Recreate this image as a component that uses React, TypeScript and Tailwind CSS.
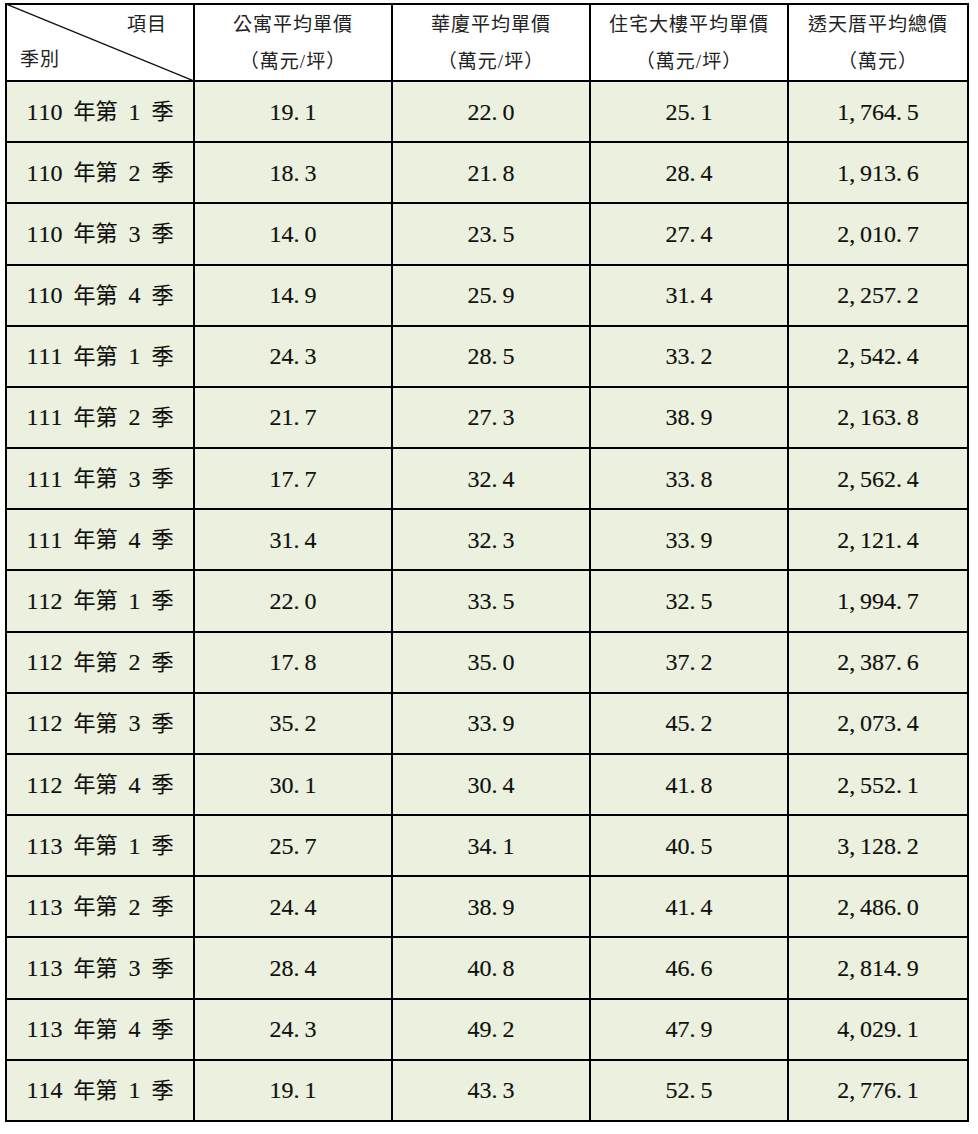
const rows: [string, string, string, string, string][] = [
  ["110 年第 1 季", "19.1", "22.0", "25.1", "1,764.5"],
  ["110 年第 2 季", "18.3", "21.8", "28.4", "1,913.6"],
  ["110 年第 3 季", "14.0", "23.5", "27.4", "2,010.7"],
  ["110 年第 4 季", "14.9", "25.9", "31.4", "2,257.2"],
  ["111 年第 1 季", "24.3", "28.5", "33.2", "2,542.4"],
  ["111 年第 2 季", "21.7", "27.3", "38.9", "2,163.8"],
  ["111 年第 3 季", "17.7", "32.4", "33.8", "2,562.4"],
  ["111 年第 4 季", "31.4", "32.3", "33.9", "2,121.4"],
  ["112 年第 1 季", "22.0", "33.5", "32.5", "1,994.7"],
  ["112 年第 2 季", "17.8", "35.0", "37.2", "2,387.6"],
  ["112 年第 3 季", "35.2", "33.9", "45.2", "2,073.4"],
  ["112 年第 4 季", "30.1", "30.4", "41.8", "2,552.1"],
  ["113 年第 1 季", "25.7", "34.1", "40.5", "3,128.2"],
  ["113 年第 2 季", "24.4", "38.9", "41.4", "2,486.0"],
  ["113 年第 3 季", "28.4", "40.8", "46.6", "2,814.9"],
  ["113 年第 4 季", "24.3", "49.2", "47.9", "4,029.1"],
  ["114 年第 1 季", "19.1", "43.3", "52.5", "2,776.1"],
];

const headers: [string, string][] = [
  ["公寓平均單價", "（萬元/坪）"],
  ["華廈平均單價", "（萬元/坪）"],
  ["住宅大樓平均單價", "（萬元/坪）"],
  ["透天厝平均總價", "（萬元）"],
];

// MingLiU draws "." and "," half an em wide; pad them to match
function Num({ value }: { value: string }) {
  return (
    <>
      {value.split("").map((ch, i) =>
        ch === "." || ch === "," ? (
          <span key={i} className="mr-[0.2em]">
            {ch}
          </span>
        ) : (
          <span key={i}>{ch}</span>
        ),
      )}
    </>
  );
}

function Label({ value }: { value: string }) {
  return (
    <>
      {value.split("").map((ch, i) =>
        ch === " " ? (
          <span key={i} className="inline-block w-[11px]" />
        ) : /[0-9]/.test(ch) ? (
          <span key={i}>{ch}</span>
        ) : (
          <span key={i} className="text-[22px]">
            {ch}
          </span>
        ),
      )}
    </>
  );
}

export default function App() {
  return (
    <div className="min-h-[1134px] bg-white pt-[3px] pl-[5px] font-['Liberation_Serif','Noto_Sans_CJK_TC',serif] text-black">
      <div className="grid h-[1119px] w-[964px] grid-cols-[186px_196px_196px_196px_178px] grid-rows-[75px_repeat(17,minmax(0,1fr))] gap-[2px] bg-black p-[2px]">
        <div className="relative flex flex-col bg-white text-[19px] tracking-[1px] text-[#222]">
          <svg
            className="absolute -top-[1px] -left-[1px] h-[77px] w-[188px]"
            viewBox="0 0 188 77"
            preserveAspectRatio="none"
          >
            <line x1="0" y1="0" x2="188" y2="77" stroke="#111" strokeWidth="1.3" />
          </svg>
          <div className="h-[37px] pr-[26px] text-right leading-[40px]">項目</div>
          <div className="h-[38px] pl-[13px] text-left leading-[36px]">季別</div>
        </div>
        {headers.map(([a, b]) => (
          <div
            key={a}
            className="flex flex-col items-center justify-center bg-white text-[19px] tracking-[1px] text-[#222]"
          >
            <div className="leading-[38px]">{a}</div>
            <div className="leading-[36px]">{b}</div>
          </div>
        ))}
        {rows.map((r) => (
          <>
            <div
              key={r[0]}
              className="flex items-center justify-center bg-[#ebf1de] text-[24px] text-[#111] [-webkit-text-stroke:0.15px_#000]"
            >
              <Label value={r[0]} />
            </div>
            {r.slice(1).map((v, i) => (
              <div
                key={r[0] + i}
                className="flex items-center justify-center bg-[#ebf1de] text-[24px] text-[#111] [-webkit-text-stroke:0.15px_#000]"
              >
                <Num value={v} />
              </div>
            ))}
          </>
        ))}
      </div>
    </div>
  );
}
